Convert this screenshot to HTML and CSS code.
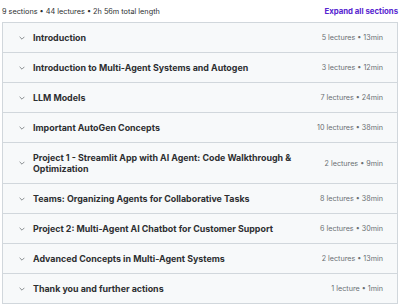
FILE: index.html
```html
<!DOCTYPE html>
<html lang="en">
  <head>
    <meta charset="UTF-8" />
    <meta name="viewport" content="width=device-width, initial-scale=1.0" />
    <title>Course content</title>
    <link rel="stylesheet" href="styles.css">
  </head>
  <body>
    <div class="content-header">
      <span class="summary">9 sections • 44 lectures • 2h 56m total length</span>
      <button class="expand-all">Expand all sections</button>
    </div>

    <div class="sections">
      <div class="section">
        <span class="chevron"><svg viewBox="0 0 10 6" width="6" height="4"><path d="M1 1l4 4 4-4" /></svg></span>
        <span class="title">Introduction</span>
        <span class="meta">5 lectures • 13min</span>
      </div>
      <div class="section">
        <span class="chevron"><svg viewBox="0 0 10 6" width="6" height="4"><path d="M1 1l4 4 4-4" /></svg></span>
        <span class="title">Introduction to Multi-Agent Systems and Autogen</span>
        <span class="meta">3 lectures • 12min</span>
      </div>
      <div class="section">
        <span class="chevron"><svg viewBox="0 0 10 6" width="6" height="4"><path d="M1 1l4 4 4-4" /></svg></span>
        <span class="title">LLM Models</span>
        <span class="meta">7 lectures • 24min</span>
      </div>
      <div class="section">
        <span class="chevron"><svg viewBox="0 0 10 6" width="6" height="4"><path d="M1 1l4 4 4-4" /></svg></span>
        <span class="title">Important AutoGen Concepts</span>
        <span class="meta">10 lectures • 38min</span>
      </div>
      <div class="section">
        <span class="chevron"><svg viewBox="0 0 10 6" width="6" height="4"><path d="M1 1l4 4 4-4" /></svg></span>
        <span class="title">Project 1 - Streamlit App with AI Agent: Code Walkthrough &amp; Optimization</span>
        <span class="meta">2 lectures • 9min</span>
      </div>
      <div class="section">
        <span class="chevron"><svg viewBox="0 0 10 6" width="6" height="4"><path d="M1 1l4 4 4-4" /></svg></span>
        <span class="title">Teams: Organizing Agents for Collaborative Tasks</span>
        <span class="meta">8 lectures • 38min</span>
      </div>
      <div class="section">
        <span class="chevron"><svg viewBox="0 0 10 6" width="6" height="4"><path d="M1 1l4 4 4-4" /></svg></span>
        <span class="title">Project 2: Multi-Agent AI Chatbot for Customer Support</span>
        <span class="meta">6 lectures • 30min</span>
      </div>
      <div class="section">
        <span class="chevron"><svg viewBox="0 0 10 6" width="6" height="4"><path d="M1 1l4 4 4-4" /></svg></span>
        <span class="title">Advanced Concepts in Multi-Agent Systems</span>
        <span class="meta">2 lectures • 13min</span>
      </div>
      <div class="section">
        <span class="chevron"><svg viewBox="0 0 10 6" width="6" height="4"><path d="M1 1l4 4 4-4" /></svg></span>
        <span class="title">Thank you and further actions</span>
        <span class="meta">1 lecture • 1min</span>
      </div>
    </div>
  </body>
</html>
```

FILE: styles.css
```css
body {
  margin: 0;
  padding: 0 2px;
  font-family: Inter, "Noto Sans", sans-serif;
  color: #2d2f31;
  background: white;
}

.content-header {
  display: flex;
  align-items: center;
  justify-content: space-between;
  height: 22px;
}

.summary {
  font-size: 7.3px;
  color: #2d2f31;
}

.expand-all {
  background: none;
  border: none;
  padding: 0;
  font-family: inherit;
  font-size: 7.8px;
  font-weight: 700;
  color: #5624d0;
  cursor: pointer;
}

.sections {
  border: 1px solid #d1d7dc;
  border-bottom: none;
}

.section {
  display: flex;
  align-items: center;
  padding: 9px 14px 9px 16px;
  background: #f7f9fa;
  border-bottom: 1px solid #d1d7dc;
}

.chevron {
  display: flex;
  width: 6px;
  margin-right: 8px;
}

.chevron path {
  fill: none;
  stroke: #6a6f73;
  stroke-width: 1.3;
}

.title {
  flex: 1;
  font-size: 8.9px;
  font-weight: 700;
  line-height: 11px;
  padding-right: 24px;
}

.meta {
  font-size: 7.2px;
  color: #6a6f73;
  white-space: nowrap;
  line-height: 11px;
}
```
